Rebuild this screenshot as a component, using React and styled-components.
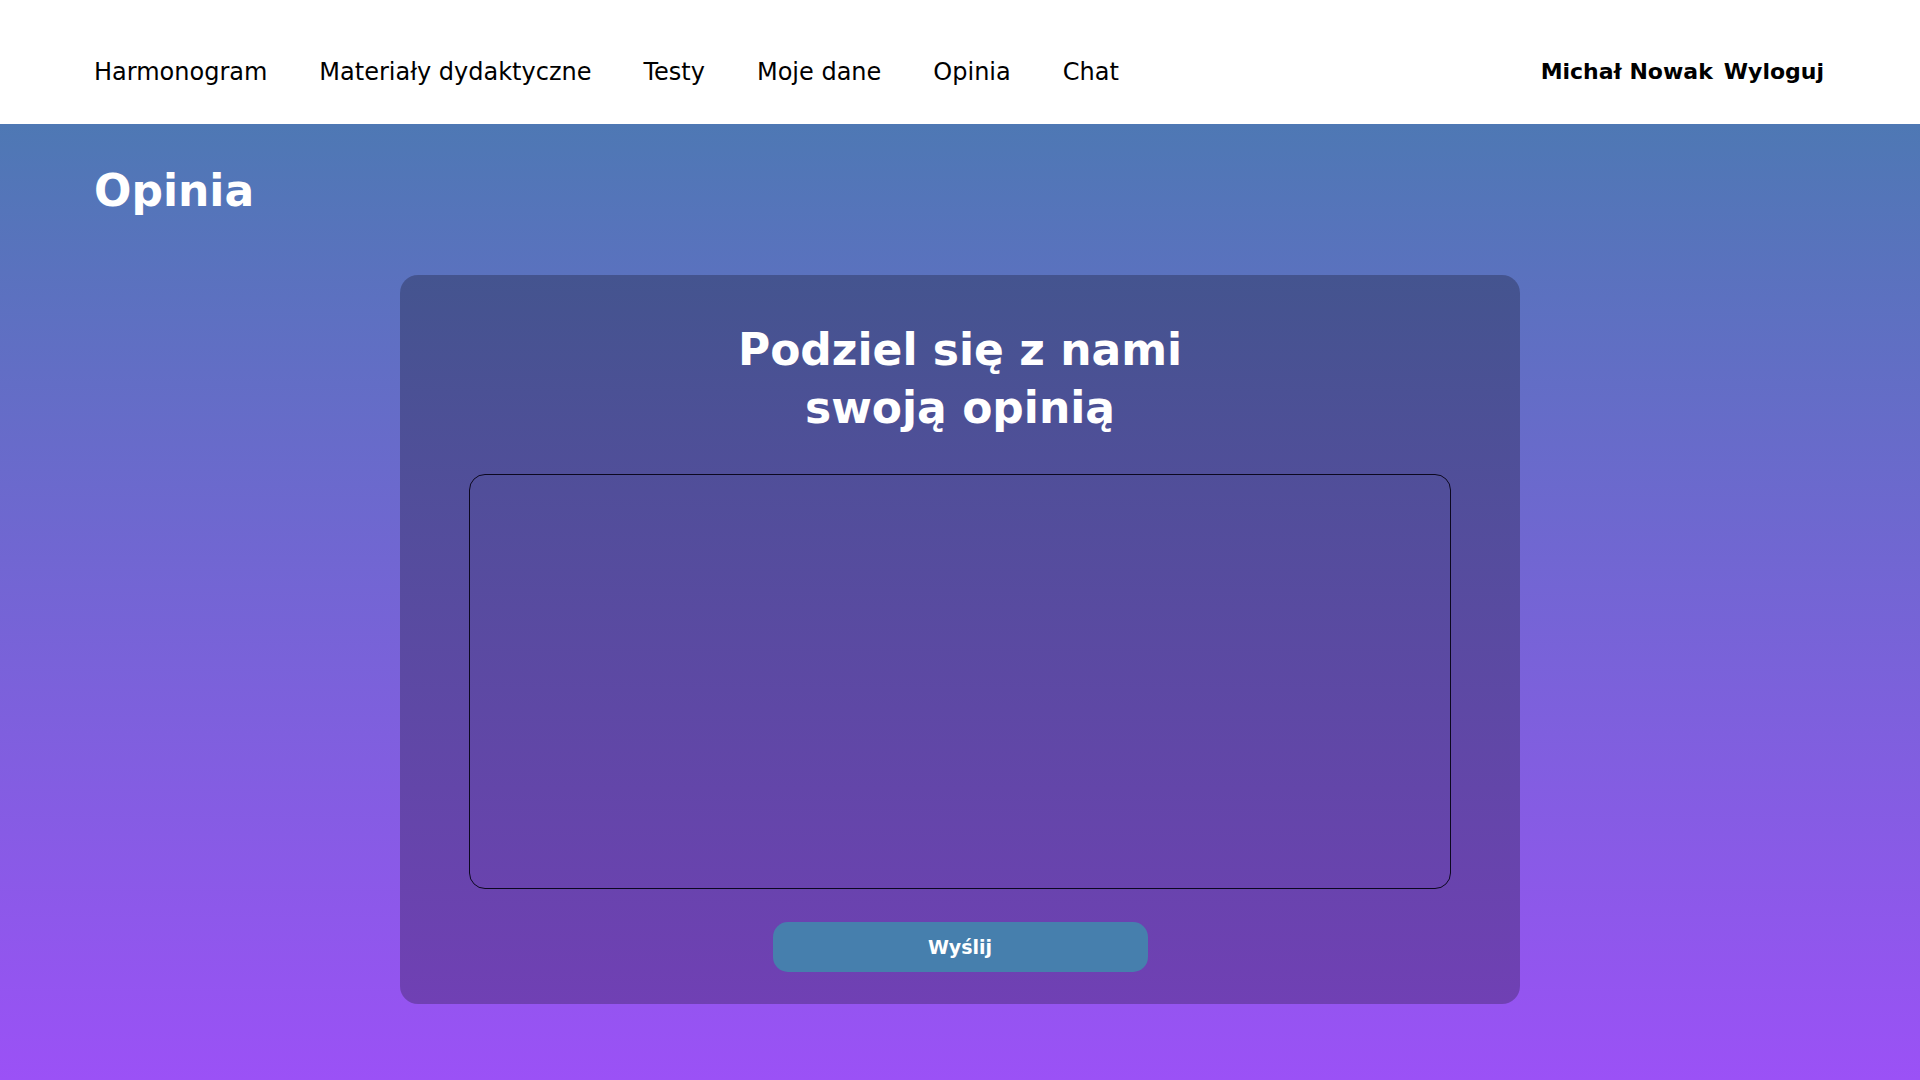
import React from "react";
import styled, { createGlobalStyle } from "styled-components";

const GlobalStyle = createGlobalStyle`
  * { box-sizing: border-box; }
  html, body { margin: 0; padding: 0; }
  body {
    font-family: "DejaVu Sans", "Liberation Sans", sans-serif;
    background: #ffffff;
    color: #000;
  }
`;

const Page = styled.div`
  min-height: 100vh;
  display: flex;
  flex-direction: column;
`;

const Nav = styled.nav`
  height: 124px;
  padding: 19px 96px 0 94px;
  display: flex;
  align-items: center;
  justify-content: space-between;
  background: #ffffff;
  flex-shrink: 0;
`;

const NavLinks = styled.ul`
  list-style: none;
  margin: 0;
  padding: 0;
  display: flex;
  align-items: center;
  gap: 52px;
`;

const NavLink = styled.a`
  font-size: 24px;
  font-weight: 400;
  color: #000;
  text-decoration: none;
  white-space: nowrap;
  cursor: pointer;
`;

const UserBox = styled.div`
  display: flex;
  align-items: center;
  gap: 11px;
`;

const UserText = styled.span`
  font-size: 22px;
  font-weight: 700;
  color: #000;
  white-space: nowrap;
`;

const Main = styled.main`
  flex: 1;
  background: linear-gradient(180deg, #4e78b4 0%, #9b51f6 100%);
  padding: 41px 94px 76px;
  display: flex;
  flex-direction: column;
`;

const PageTitle = styled.h1`
  margin: 0 0 59px;
  font-size: 44px;
  font-weight: 700;
  line-height: 51px;
  color: #ffffff;
`;

const Card = styled.section`
  width: 1120px;
  align-self: center;
  border-radius: 18px;
  background: linear-gradient(180deg, #44548f 0%, #7040b4 100%);
  padding: 46px 69px 32px;
  display: flex;
  flex-direction: column;
  align-items: center;
`;

const CardTitle = styled.h2`
  margin: 0 0 37px;
  font-size: 44px;
  font-weight: 700;
  line-height: 58px;
  color: #ffffff;
  text-align: center;
`;

const Feedback = styled.textarea`
  width: 100%;
  height: 415px;
  background: transparent;
  border: 1px solid #0c0820;
  border-radius: 16px;
  resize: none;
  outline: none;
  padding: 16px;
  font-family: inherit;
  font-size: 18px;
  color: #fff;
`;

const SubmitButton = styled.button`
  margin-top: 33px;
  width: 375px;
  height: 50px;
  border: none;
  border-radius: 15px;
  background: #467fad;
  color: #ffffff;
  font-family: inherit;
  font-size: 19px;
  font-weight: 700;
  cursor: pointer;
`;

const links = ["Harmonogram", "Materiały dydaktyczne", "Testy", "Moje dane", "Opinia", "Chat"];

export default function App() {
  return (
    <>
      <GlobalStyle />
      <Page>
        <Nav>
          <NavLinks>
            {links.map((l) => (
              <li key={l}>
                <NavLink>{l}</NavLink>
              </li>
            ))}
          </NavLinks>
          <UserBox>
            <UserText>Michał Nowak</UserText>
            <UserText>Wyloguj</UserText>
          </UserBox>
        </Nav>
        <Main>
          <PageTitle>Opinia</PageTitle>
          <Card>
            <CardTitle>
              Podziel się z nami
              <br />
              swoją opinią
            </CardTitle>
            <Feedback />
            <SubmitButton>Wyślij</SubmitButton>
          </Card>
        </Main>
      </Page>
    </>
  );
}
